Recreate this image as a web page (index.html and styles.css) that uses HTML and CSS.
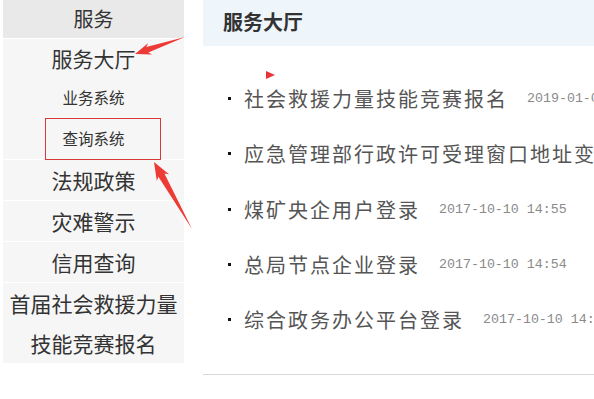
FILE: index.html
```html
<!DOCTYPE html>
<html lang="zh-CN">
<head>
    <meta charset="UTF-8">
    <title>服务大厅</title>
    <link rel="stylesheet" href="styles.css">
</head>
<body>
    <div class="page">
        <div class="side">
            <div class="side-title">服务</div>
            <ul class="side-menu">
                <li>
                    <a href="#">服务大厅</a>
                    <ul class="sub">
                        <li><a href="#">业务系统</a></li>
                        <li><a href="#">查询系统</a></li>
                    </ul>
                </li>
                <li><a href="#">法规政策</a></li>
                <li><a href="#">灾难警示</a></li>
                <li><a href="#">信用查询</a></li>
                <li class="wrap"><a href="#">首届社会救援力量技能竞赛报名</a></li>
            </ul>
        </div>
        <div class="main">
            <div class="main-title">服务大厅</div>
            <ul class="news">
                <li><a href="#">社会救援力量技能竞赛报名</a><span class="date">2019-01-08 10:00</span></li>
                <li><a href="#">应急管理部行政许可受理窗口地址变更公告</a><span class="date">2018-05-02 09:30</span></li>
                <li><a href="#">煤矿央企用户登录</a><span class="date">2017-10-10 14:55</span></li>
                <li><a href="#">总局节点企业登录</a><span class="date">2017-10-10 14:54</span></li>
                <li><a href="#">综合政务办公平台登录</a><span class="date">2017-10-10 14:53</span></li>
            </ul>
        </div>
    </div>
    <!-- 标注 -->
    <svg class="marks" width="594" height="399" viewBox="0 0 594 399">
        <rect x="45.5" y="118.5" width="115" height="41" fill="none" stroke="#d9393b" stroke-width="1"/>
        <polygon points="135,54 148.3,43.1 146.3,46.9 185,37 148.3,52.6 152.1,54.5" fill="#ee3a35"/>
        <polygon points="154,162 169,174.2 164.4,173.4 192,229 158.4,176.8 156.8,181.1" fill="#ee3a35"/>
        <polygon points="266,71 275,75 266,79" fill="#e8353a"/>
    </svg>
</body>
</html>
```

FILE: styles.css
```css
body{
    margin: 0;
    overflow: hidden;
    font-family: "Noto Sans CJK SC", sans-serif;
    color: #333;
}
ul{
    list-style: none;
    margin: 0;
    padding: 0;
}
a{
    color: inherit;
    text-decoration: none;
}
.page{
    display: flex;
    align-items: flex-start;
}
.side{
    width: 181px;
    margin-left: 3px;
    flex-shrink: 0;
}
.side-title{
    height: 38px;
    line-height: 38px;
    background: #e9e9e9;
    text-align: center;
    font-size: 20px;
}
.side-menu > li{
    border-top: 1px solid #fff;
    background: #f6f6f6;
    text-align: center;
    font-size: 21px;
    line-height: 40px;
}
.side-menu > li:first-child > a{
    display: block;
    line-height: 38px;
}
.side-menu .sub li{
    font-size: 15.5px;
    line-height: 40px;
}
.side-menu .sub li + li{
    line-height: 42px;
}
.side-menu .wrap{
    padding: 0 2px;
}
.main{
    flex: 1;
    margin-left: 19px;
    overflow: hidden;
    border-bottom: 1px solid #d8d8d8;
}
.main-title{
    height: 46px;
    line-height: 44px;
    background: #eef5fb;
    padding-left: 20px;
    font-size: 20px;
    font-weight: bold;
    color: #333;
}
.news{
    padding: 25px 0 27px 25px;
}
.news li{
    display: flex;
    align-items: center;
    height: 55.3px;
    white-space: nowrap;
}
.news li::before{
    content: "";
    width: 3px;
    height: 3px;
    background: #111;
    margin-right: 13px;
    flex-shrink: 0;
}
.news a{
    font-size: 20px;
    letter-spacing: 2px;
    color: #555;
}
.date{
    margin-left: 19px;
    font-family: "Liberation Mono", monospace;
    font-size: 13.3px;
    color: #8a8a8a;
}
.marks{
    position: absolute;
    left: 0;
    top: 0;
    pointer-events: none;
}
```
